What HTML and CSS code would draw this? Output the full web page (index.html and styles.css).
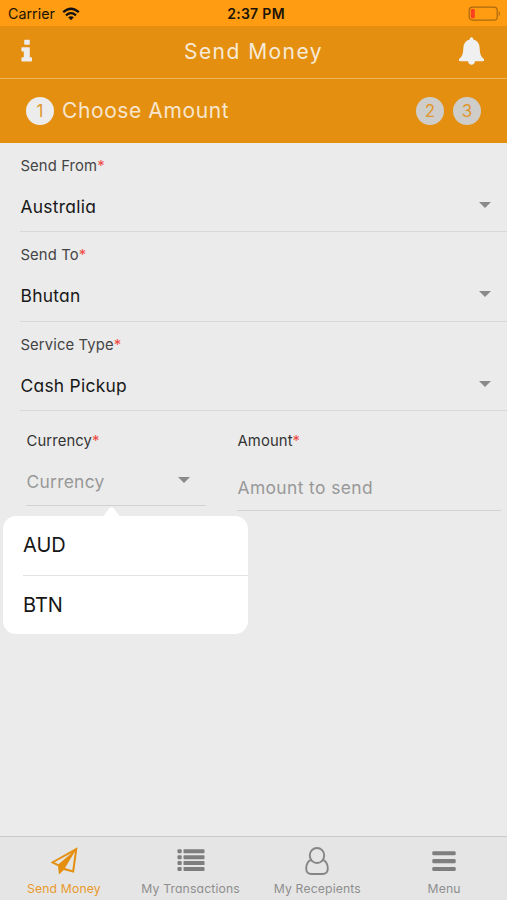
FILE: index.html
```html
<!DOCTYPE html>
<html lang="en">
<head>
<meta charset="utf-8">
<title>Send Money</title>
<link rel="stylesheet" href="styles.css">
</head>
<body>
<div class="app">
  <div class="status">
    <div class="carrier"><span>Carrier</span>
      <svg width="18" height="14" viewBox="0 0 18 14"><g fill="none" stroke="#111" stroke-width="2.3"><path d="M1.2 5.2Q9-1.8 16.8 5.2"/><path d="M4 8.3Q9 4 14 8.3"/></g><path d="M9 13.2L6.2 10.3Q9 8.2 11.8 10.3Z" fill="#111"/></svg>
    </div>
    <div class="time">2:37 PM</div>
    <div class="battery">
      <svg width="33" height="16" viewBox="0 0 33 16"><rect x="1.2" y="1.1" width="28" height="13" rx="3.2" fill="none" stroke="#a9690f" stroke-width="1.2"/><rect x="2.8" y="3" width="4" height="9.2" rx="1" fill="#fb4021"/><path d="M30.7 5.1Q33.2 7.700 30.7 10.2Z" fill="#a9690f"/></svg>
    </div>
  </div>
  <header class="header">
    <svg class="info" width="12" height="24" viewBox="0 0 12 24"><path fill="#ececec" d="M3.2 1.5Q3.2.8 4 .8H8Q8.800.8 8.800 1.5V5Q8.800 5.700 8 5.700H4Q3.200 5.700 3.200 5ZM1.200 8.300H8Q8.800 8.300 8.800 9.100V18.200H10.200Q11 18.200 11 19V21.800Q11 22.600 10.200 22.600H1.200Q.4 22.600.4 21.800V19Q.4 18.200 1.200 18.200H2.800V12.500H1.200Q.4 12.500.4 11.700V9.100Q.4 8.300 1.200 8.300Z"/></svg>
    <h1>Send Money</h1>
    <svg class="bell" width="27" height="28" viewBox="0 0 27 28"><path fill="#f0f0f0" d="M13.500.3Q15.200.3 15.400 2.500Q21 4 21.600 10.500C22 17 22.500 19.500 26 22Q26.600 24.200 25 24.300H17Q16.500 27.700 13.500 27.700T10 24.300H2Q.4 24.200 1 22C4.500 19.500 5 17 5.400 10.500Q6 4 11.600 2.500Q11.800.3 13.500.3Z"/></svg>
  </header>
  <div class="steps">
    <span class="dot current">1</span>
    <span class="step-title">Choose Amount</span>
    <span class="dot">2</span>
    <span class="dot">3</span>
  </div>
  <main>
    <div class="field"><div class="label">Send From<i>*</i></div><div class="select"><span>Australia</span><b class="arrow"></b></div></div>
    <div class="field"><div class="label">Send To<i>*</i></div><div class="select"><span>Bhutan</span><b class="arrow"></b></div></div>
    <div class="field"><div class="label">Service Type<i>*</i></div><div class="select"><span>Cash Pickup</span><b class="arrow"></b></div></div>
    <div class="pair">
      <div class="col currency">
        <div class="label">Currency<i>*</i></div>
        <div class="select empty"><span>Currency</span><b class="arrow"></b></div>
        <div class="popover"><div class="option">AUD</div><div class="option">BTN</div></div>
      </div>
      <div class="col amount">
        <div class="label">Amount<i>*</i></div>
        <div class="select empty"><span>Amount to send</span></div>
      </div>
    </div>
  </main>
  <nav class="tabs">
    <div class="tab active">
      <svg width="28" height="28" viewBox="0 0 28 28"><path d="M27.500 .3L.5 15.500L8 19.300L9 27.500L13.700 22.900L24 25.700ZM24.900 4.500L22.300 23.300L15 21ZM22 5.700L8.500 17.200L4.400 15.300Z" fill="#e48f10" fill-rule="evenodd"/></svg>
      <span>Send Money</span>
    </div>
    <div class="tab transactions">
      <svg width="28" height="28" viewBox="0 0 28 28" fill="#7e7e7e"><rect x=".5" y="2.300" width="4.200" height="4" rx="1"/><rect x="6.500" y="2.300" width="21" height="4" rx=".7"/><rect x=".5" y="8.200" width="4.200" height="4" rx="1"/><rect x="6.500" y="8.200" width="21" height="4" rx=".7"/><rect x=".5" y="14.100" width="4.200" height="4" rx="1"/><rect x="6.500" y="14.100" width="21" height="4" rx=".7"/><rect x=".5" y="20" width="4.200" height="4" rx="1"/><rect x="6.500" y="20" width="21" height="4" rx=".7"/></svg>
      <span>My Transactions</span>
    </div>
    <div class="tab recipients">
      <svg width="28" height="28" viewBox="0 0 28 28" fill="none" stroke="#858585" stroke-width="1.900"><ellipse cx="14" cy="8.500" rx="7.200" ry="7.500"/><path d="M8.200 12.800C4.500 14 3.300 17.500 3.200 21.500Q3.200 27 8.500 27H19.500Q24.800 27 24.800 21.500C24.700 17.500 23.500 14 19.800 12.800"/></svg>
      <span>My Recepients</span>
    </div>
    <div class="tab menu">
      <svg width="28" height="28" viewBox="0 0 28 28" fill="#7e7e7e"><rect x="2.300" y="4.200" width="23.400" height="4.100" rx="1.300"/><rect x="2.300" y="12.100" width="23.400" height="4.100" rx="1.300"/><rect x="2.300" y="19.900" width="23.400" height="4.100" rx="1.300"/></svg>
      <span>Menu</span>
    </div>
  </nav>
</div>
</body>
</html>
```
FILE: styles.css
```css
* { box-sizing: border-box; }
body { margin: 0; font-family: Inter, "Liberation Sans", sans-serif; font-feature-settings: "cv11" 1; background: #ebebeb; }
svg { display: block; flex: none; }
.app { width: 507px; height: 900px; display: flex; flex-direction: column; overflow: hidden; }
.status { height: 26px; background: #ff9c12; display: grid; grid-template-columns: 1fr auto 1fr; align-items: center; padding: 1px 6px 0 8px; font-size: 14.3px; color: #1b1306; flex: none; font-feature-settings: normal; }
.carrier { display: flex; align-items: center; gap: 7px; }
.time { font-weight: 600; font-size: 14px; letter-spacing: .3px; padding-left: 3px; }
.battery { display: flex; justify-content: flex-end; }
.header { height: 53px; flex: none; background: #e48f10; border-bottom: 1px solid #efb35b; display: flex; align-items: center; justify-content: space-between; padding: 0 22px 2px 21px; }
.header h1 { margin: 0; font-size: 21px; font-weight: 400; letter-spacing: 1.45px; color: #f7ead6; padding: 1px 0 0 16px; }
.steps { height: 63.5px; flex: none; background: #e48f10; display: flex; align-items: center; padding: 0 26px; gap: 9px; }
.dot { width: 28px; height: 28px; border-radius: 50%; background: #cfcdc9; color: #e0962d; font-size: 17px; display: flex; align-items: center; justify-content: center; }
.dot.current { background: #ececec; margin-right: -1px; }
.step-title { flex: 1; font-size: 21px; letter-spacing: .6px; color: #f7e6cd; }
main { flex: 1; }
.field { height: 89.5px; margin-left: 20px; border-bottom: 1px solid #d8d8d8; padding-top: 12px; }
.label { font-size: 14.8px; line-height: 22px; letter-spacing: .12px; color: #444; padding-left: .5px; }
.label i { font-style: normal; color: #ef4b45; }
.select { font-size: 17.4px; line-height: 24px; letter-spacing: .28px; margin-top: 18px; display: flex; justify-content: space-between; align-items: center; padding: 0 16px 0 .5px; color: #181818; }
.arrow { border: 6px solid transparent; border-top-color: #8a8a8a; border-bottom: 0; margin-bottom: 4px; }
.pair { display: flex; gap: 31px; padding: 18px 6px 0 26px; align-items: flex-start; }
.col .label { color: #333; position: relative; top: .5px; }
.currency { width: 180px; height: 77px; border-bottom: 1px solid #d2d2d2; position: relative; }
.amount { flex: 1; height: 82px; border-bottom: 1px solid #d2d2d2; }
.empty { color: #989898; margin-top: 19px; }
.amount .empty { margin-top: 25px; letter-spacing: .4px; }
.popover { position: absolute; left: -23px; top: 87px; width: 245px; height: 118px; border-radius: 13px; background: #fff; }
.popover::before { content: ""; position: absolute; left: 98px; top: -9px; width: 21px; height: 10px; background: #fff; clip-path: polygon(0 100%, 14% 85%, 38% 14%, 50% 0, 62% 14%, 86% 85%, 100% 100%); }
.option { height: 59px; margin-left: 20px; font-size: 20px; line-height: 59px; color: #171717; }
.option:first-child { height: 60px; border-bottom: 1px solid #e2e2e2; }
.tabs { height: 64px; flex: none; display: grid; grid-template-columns: repeat(4, 1fr); border-top: 1px solid #cbcbcb; background: #e5e5e5; }
.tab { display: flex; flex-direction: column; align-items: center; padding: 10px 0 0 1px; gap: 5px; font-size: 12.2px; line-height: 18px; letter-spacing: .15px; color: #8e8e8e; white-space: nowrap; }
.tab.active { color: #e99a2b; }
```
